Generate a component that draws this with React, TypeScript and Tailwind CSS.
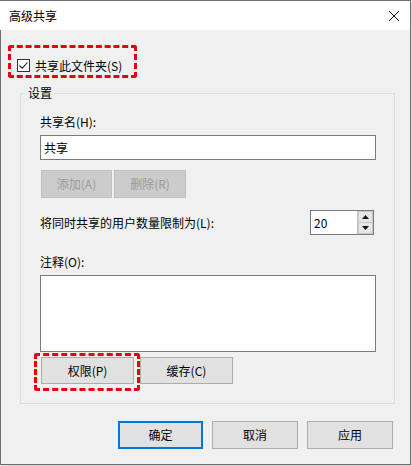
import React from "react";

const font = { fontFamily: '"Microsoft YaHei UI", "Noto Sans CJK SC", "Noto Sans", sans-serif' };

function WinButton({ label, className = "", disabled = false, primary = false }: { label: string; className?: string; disabled?: boolean; primary?: boolean }) {
  const base = "flex items-center justify-center text-[12px] leading-[16px]";
  const look = disabled
    ? "bg-[#cccccc] border border-[#bfbfbf] text-[#9a9a9a]"
    : primary
    ? "bg-[#e1e1e1] border-2 border-[#0078d7] text-black"
    : "bg-[#e1e1e1] border border-[#adadad] text-black";
  return <div className={`${base} ${look} ${className}`}>{label}</div>;
}

export default function App() {
  return (
    <div className="w-[412px] h-[466px] bg-white" style={font}>
      <div className="w-[411px] h-[465px] flex flex-col border-t border-r border-b border-[#6f6f6f] shadow-[1px_1px_2px_rgba(0,0,0,0.25)]">
        {/* Title bar */}
        <div className="h-[29px] bg-white flex items-center justify-between pl-[9px] pr-[9px]">
          <span className="text-[12px] leading-[16px] text-black">高级共享</span>
          <svg width="12" height="12" viewBox="0 0 12 12" className="mr-[1px]">
            <path d="M1 1 L11 11 M11 1 L1 11" stroke="#111" strokeWidth="1" fill="none" />
          </svg>
        </div>

        {/* Body */}
        <div className="flex-1 bg-[#f0f0f0] border-l border-[#6f6f6f] flex flex-col">
          {/* Share checkbox (highlighted) */}
          <div className="mt-[15px] ml-[7px] w-[129px] h-[33px] border-[3px] border-dashed border-[#e8000b] rounded-[3px] flex items-start pt-[11px] pl-[6px]">
            <div className="w-[13px] h-[13px] border border-[#333333] bg-white flex items-center justify-center">
              <svg width="11" height="11" viewBox="0 0 11 11">
                <path d="M1.5 5.5 L4.2 8.2 L9.5 2.5" stroke="#222" strokeWidth="1.1" fill="none" />
              </svg>
            </div>
            <span className="ml-[5px] text-[12px] leading-[14px] text-black">共享此文件夹(S)</span>
          </div>

          {/* Settings group */}
          <fieldset className="mt-[7px] ml-[19px] w-[375px] border border-[#dcdcdc] pl-[19px] pr-[18px] pb-[12px]">
            <legend className="ml-[-14px] px-[2px] text-[12px] leading-[16px] text-black">设置</legend>

            <div className="mt-[13px] text-[12px] leading-[16px] text-black">共享名(H):</div>
            <div className="mt-[5px] h-[25px] bg-white border border-[#7a7a7a] flex items-center pl-[3px] text-[12px] text-black">共享</div>

            <div className="mt-[10px] flex gap-[2px] ml-[1px]">
              <WinButton label="添加(A)" disabled className="w-[71px] h-[28px]" />
              <WinButton label="删除(R)" disabled className="w-[72px] h-[28px]" />
            </div>

            <div className="mt-[12px] flex items-center justify-between pr-[2px]">
              <span className="text-[12px] leading-[16px] text-black">将同时共享的用户数量限制为(L):</span>
              <div className="w-[64px] h-[25px] flex border border-[#7a7a7a] bg-white">
                <div className="flex-1 flex items-center pl-[3px] text-[12px] text-black">20</div>
                <div className="w-[16px] flex flex-col border-l border-[#c4c4c4] bg-[#c8c8c8] p-[1px] gap-[1px]">
                  <div className="flex-1 bg-[#e6e6e6] flex items-center justify-center">
                    <svg width="7" height="4" viewBox="0 0 7 4"><path d="M0 4 L3.5 0 L7 4 Z" fill="#111" /></svg>
                  </div>
                  <div className="flex-1 bg-[#e6e6e6] flex items-center justify-center">
                    <svg width="7" height="4" viewBox="0 0 7 4"><path d="M0 0 L3.5 4 L7 0 Z" fill="#111" /></svg>
                  </div>
                </div>
              </div>
            </div>

            <div className="mt-[19px] text-[12px] leading-[16px] text-black">注释(O):</div>
            <div className="mt-[5px] h-[77px] bg-white border border-[#7a7a7a]" />

            <div className="mt-[1px] flex items-start">
              <div className="ml-[-6px] border-[3px] border-dashed border-[#e8000b] rounded-[3px] pl-[4px] pr-[3px] pt-[1px] pb-[4px]">
                <WinButton label="权限(P)" className="w-[93px] h-[27px]" />
              </div>
              <WinButton label="缓存(C)" className="mt-[4px] w-[93px] h-[27px]" />
            </div>
          </fieldset>

          {/* Dialog buttons */}
          <div className="mt-[17px] flex justify-end gap-[9px] pr-[17px]">
            <WinButton label="确定" primary className="w-[85px] h-[28px]" />
            <WinButton label="取消" className="w-[86px] h-[28px]" />
            <WinButton label="应用" className="w-[86px] h-[28px]" />
          </div>
        </div>
      </div>
    </div>
  );
}
